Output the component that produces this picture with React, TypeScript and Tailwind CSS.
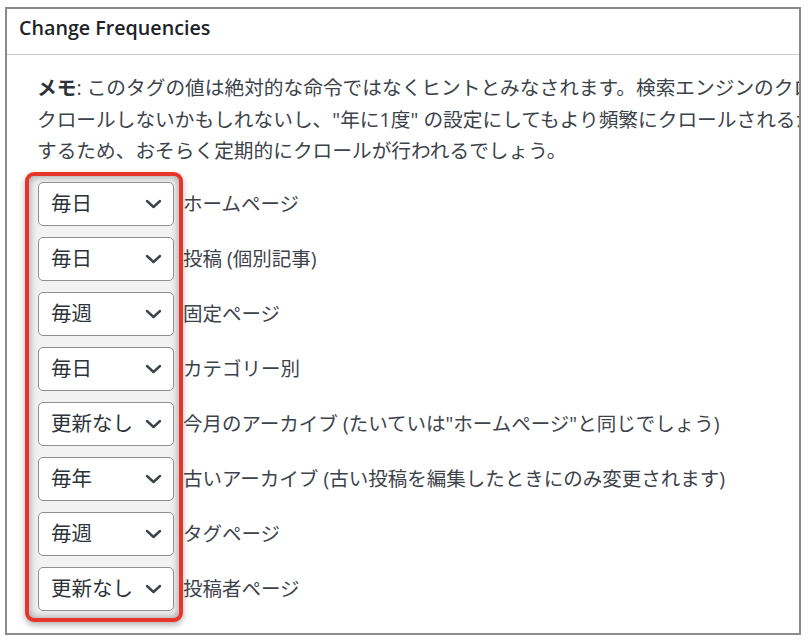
import { useState } from 'react';

const FREQS = ['常時', '毎時', '毎日', '毎週', '毎月', '毎年', '更新なし'];

const ROWS = [
  { value: '毎日', label: 'ホームページ' },
  { value: '毎日', label: '投稿 (個別記事)' },
  { value: '毎週', label: '固定ページ' },
  { value: '毎日', label: 'カテゴリー別' },
  { value: '更新なし', label: '今月のアーカイブ (たいていは"ホームページ"と同じでしょう)' },
  { value: '毎年', label: '古いアーカイブ (古い投稿を編集したときにのみ変更されます)' },
  { value: '毎週', label: 'タグページ' },
  { value: '更新なし', label: '投稿者ページ' },
];

const FreqSelect = ({ initial }: { initial: string }) => {
  const [value, setValue] = useState(initial);

  return (
    <div className="relative w-[136px] h-[44px]">
      <select
        value={value}
        onChange={(e) => setValue(e.target.value)}
        className="appearance-none w-full h-full rounded-[5px] border border-[#8c8f94] bg-white pl-[12px] pr-[30px] text-[20.5px] text-[#2c3338] outline-none"
      >
        {FREQS.map((f) => (
          <option key={f} value={f}>{f}</option>
        ))}
      </select>
      {/* chevron */}
      <svg
        className="absolute right-[12px] top-1/2 -translate-y-1/2 pointer-events-none"
        width="17"
        height="10"
        viewBox="0 0 17 10"
        fill="none"
      >
        <path d="M2 2l6.5 6 6.5-6" stroke="#3c434a" strokeWidth="2.4" strokeLinecap="round" strokeLinejoin="round" />
      </svg>
    </div>
  );
};

export default function App() {
  return (
    <div
      className="min-h-screen bg-white pt-[7px] pl-[5px] pr-[11px] text-[#3c434a]"
      style={{ fontFamily: '"Open Sans", "Noto Sans CJK JP", sans-serif' }}
    >
      <div className="w-[796px] h-[628px] border-2 border-[#8a8a8a] bg-white overflow-hidden">
        {/* Header */}
        <div className="h-[46px] border-b border-[#c9cbd0] flex items-center pl-[12px] pb-[8px]">
          <h2 className="text-[19.7px] font-semibold text-[#1d2327] leading-none">Change Frequencies</h2>
        </div>

        {/* Body */}
        <div className="pt-[17px] pl-[18px]">
          <p className="pl-[12px] text-[19.7px] leading-[31.5px] whitespace-nowrap">
            <span className="block">
              <strong className="font-bold text-[#2c3338]">メモ</strong>: このタグの値は絶対的な命令ではなくヒントとみなされます。検索エンジンのクローラーはこの設定を考慮に入れますが、"1時間おき" の設定にしてもその頻度で
            </span>
            <span className="block">
              クロールしないかもしれないし、"年に1度" の設定にしてもより頻繁にクロールされるかもしれません。また "更新なし" に設定されたページも、予想外の変更に対応
            </span>
            <span className="block">するため、おそらく定期的にクロールが行われるでしょう。</span>
          </p>

          <div className="mt-[5px] flex">
            <div className="flex flex-col gap-[11px] rounded-[9px] border-[4px] border-[#e8352a] bg-[#f2f2f2] pt-[6px] pb-[7px] pl-[9px] pr-[5px] shadow-[inset_0_0_8px_rgba(0,0,0,0.4),0_3px_6px_rgba(0,0,0,0.3)]">
              {ROWS.map((r, i) => (
                <FreqSelect key={i} initial={r.value} />
              ))}
            </div>
            <div className="flex flex-col gap-[11px] pt-[10px]">
              {ROWS.map((r, i) => (
                <div key={i} className="h-[44px] flex items-center text-[19.5px] whitespace-nowrap">
                  {r.label}
                </div>
              ))}
            </div>
          </div>
        </div>
      </div>
    </div>
  );
}
